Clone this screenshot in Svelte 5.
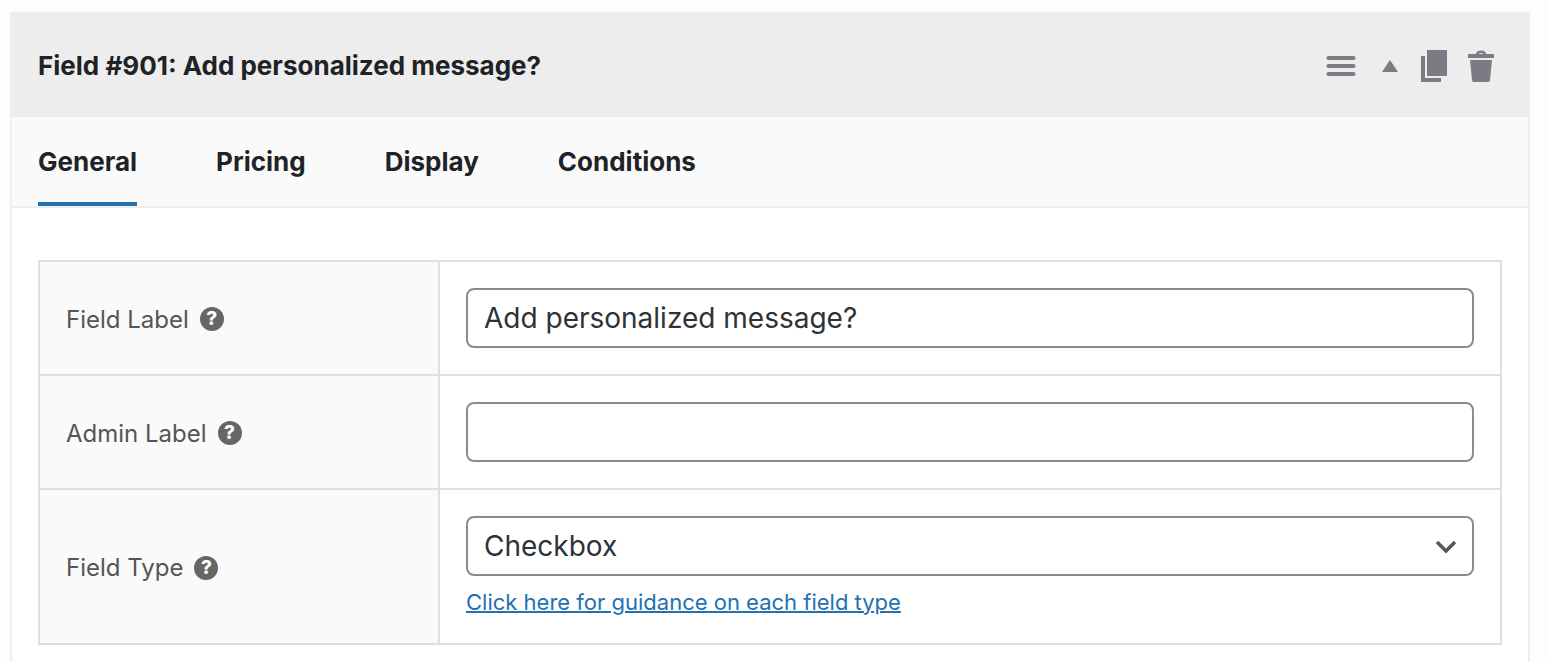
<script>
    let activeTab = $state('General');
    let fieldLabel = $state('Add personalized message?');
    let adminLabel = $state('');
    let fieldType = $state('Checkbox');

    const tabs = ['General', 'Pricing', 'Display', 'Conditions'];
    const fieldTypes = ['Checkbox', 'Text', 'Textarea', 'Select'];
</script>

{#snippet help(name)}
    <button type="button" class="help" aria-label="Help: {name}">?</button>
{/snippet}

<div class="page">
    <section class="field">
        <header>
            <h2>Field #901: Add personalized message?</h2>
            <div class="actions">
                <button type="button" aria-label="Move">
                    <svg width="30" height="22" viewBox="0 0 30 22">
                        <path d="M2.5 3H27.5M2.5 11H27.5M2.5 19H27.5" stroke="currentColor" stroke-width="4" stroke-linecap="round" />
                    </svg>
                </button>
                <button type="button" class="toggle" aria-label="Collapse">
                    <svg width="16" height="12" viewBox="0 0 16 12">
                        <path d="M8 0L16 12H0Z" fill="currentColor" />
                    </svg>
                </button>
                <button type="button" class="copy" aria-label="Duplicate">
                    <svg width="26" height="32" viewBox="0 0 26 32">
                        <path d="M6 0H26V26H6ZM0 6H4V28H20V32H0Z" fill="currentColor" />
                    </svg>
                </button>
                <button type="button" aria-label="Delete">
                    <svg width="26" height="32" viewBox="0 0 26 32">
                        <path d="M9 5C9 0.5 17 0.5 17 5" fill="none" stroke="currentColor" stroke-width="2.5" />
                        <path d="M1 4H25Q26 4 26 5V8H0V5Q0 4 1 4ZM2 10H24L22 30Q22 32 20 32H6Q4 32 4 30Z" fill="currentColor" />
                    </svg>
                </button>
            </div>
        </header>

        <nav>
            {#each tabs as tab}
                <button type="button" class:active={activeTab === tab} onclick={() => (activeTab = tab)}>{tab}</button>
            {/each}
        </nav>

        <div class="settings">
            <div class="row">
                <div class="name">
                    <label for="field-label">Field Label</label>
                    {@render help('Field Label')}
                </div>
                <div class="value">
                    <input id="field-label" type="text" bind:value={fieldLabel} />
                </div>
            </div>
            <div class="row">
                <div class="name">
                    <label for="admin-label">Admin Label</label>
                    {@render help('Admin Label')}
                </div>
                <div class="value">
                    <input id="admin-label" type="text" bind:value={adminLabel} />
                </div>
            </div>
            <div class="row">
                <div class="name">
                    <label for="field-type">Field Type</label>
                    {@render help('Field Type')}
                </div>
                <div class="value">
                    <div class="select">
                        <select id="field-type" bind:value={fieldType}>
                            {#each fieldTypes as type}
                                <option>{type}</option>
                            {/each}
                        </select>
                        <svg width="22" height="14" viewBox="0 0 22 14">
                            <path d="M2 2L11 11L20 2" fill="none" stroke="#50575e" stroke-width="3.5" />
                        </svg>
                    </div>
                    <a href="#field-types">Click here for guidance on each field type</a>
                </div>
            </div>
        </div>
    </section>
</div>

<style>
    :global(body) {
        margin: 0;
        background: #fdfdfd;
    }

    .page {
        display: flex;
        box-sizing: border-box;
        min-height: 100vh;
        padding: 12px 18px 0 10px;
        font-family: Inter, "Liberation Sans", sans-serif;
        color: #1d2327;
    }

    .field {
        flex: 1;
        min-width: 0;
        border: 2px solid #eee;
        border-top: 0;
        border-bottom: 0;
        background: #fff;
    }

    button {
        padding: 0;
        border: 0;
        background: none;
        font-family: inherit;
        color: inherit;
        cursor: pointer;
    }

    svg {
        display: block;
    }

    header {
        display: flex;
        align-items: center;
        justify-content: space-between;
        margin: 0 -2px;
        padding: 36px 36px 33px 28px;
        background: #ededed;
    }

    h2 {
        margin: 0;
        font-size: 26px;
        line-height: 36px;
        font-weight: 700;
    }

    .actions {
        display: flex;
        align-items: center;
        color: #7b7b83;
    }

    .toggle {
        margin-left: 26px;
    }

    .copy {
        margin: 0 21px 0 23px;
    }

    nav {
        display: flex;
        gap: 79px;
        padding: 0 26px;
        border-bottom: 2px solid #eee;
        background: #fafafa;
    }

    nav button {
        padding: 29px 0 24px;
        border-bottom: 4px solid transparent;
        font-size: 26px;
        line-height: 32px;
        font-weight: 700;
    }

    nav button.active {
        border-color: #2271b1;
    }

    .settings {
        margin: 52px 26px 17px;
        border: 2px solid #dfdfdf;
    }

    .row {
        display: grid;
        grid-template-columns: 400px 1fr;
    }

    .row + .row {
        border-top: 2px solid #dfdfdf;
    }

    .name {
        display: flex;
        align-items: center;
        gap: 11px;
        box-sizing: border-box;
        padding: 2px 26px 0;
        border-right: 2px solid #dfdfdf;
        background: #fafafa;
        font-size: 24px;
        color: #555;
    }

    .help {
        width: 24px;
        height: 24px;
        border-radius: 50%;
        background: #666;
        color: #fff;
        font-size: 19px;
        line-height: 24px;
        font-weight: 800;
        text-align: center;
    }

    .value {
        padding: 26px;
    }

    input,
    select {
        display: block;
        box-sizing: border-box;
        width: 100%;
        height: 60px;
        padding: 0 16px;
        border: 2px solid #8c8c8f;
        border-radius: 8px;
        background: #fff;
        font-family: inherit;
        font-size: 28px;
        color: #2c3338;
    }

    select {
        appearance: none;
    }

    .select {
        position: relative;
    }

    .select svg {
        position: absolute;
        top: 24px;
        right: 17px;
        pointer-events: none;
    }

    a {
        display: inline-block;
        margin: 12px 0 1px;
        font-size: 22px;
        line-height: 28px;
        color: #2271b1;
        text-decoration-thickness: 2px;
    }
</style>
